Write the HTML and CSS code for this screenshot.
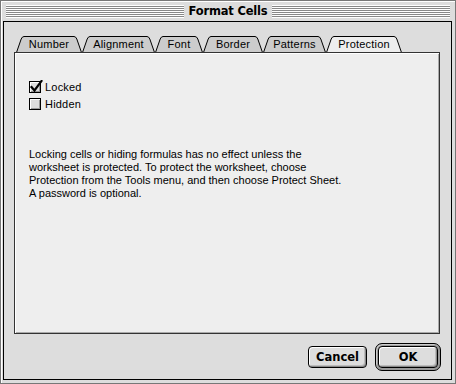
FILE: index.html
```html
<!DOCTYPE html>
<html>
<head>
<meta charset="utf-8">
<title>Format Cells</title>
<link rel="stylesheet" href="styles.css">
</head>
<body>
<div class="window">
  <div class="titlebar">
    <div class="stripes"></div>
    <div class="title">Format Cells</div>
    <div class="stripes"></div>
  </div>
  <div class="content">
    <div class="tabs">
      <div class="tab">
        <svg class="tab-edge" width="8" height="17" viewBox="0 0 8 17"><path class="tab-fill" d="M0 17 L5.2 3 Q6.2 0.5 8 0.5 L8 17 Z"/><path class="tab-line" d="M0.5 16.5 L5.2 3 Q6.2 0.5 8 0.5"/></svg>
        <span class="tab-label w-number">Number</span>
        <svg class="tab-edge" width="8" height="17" viewBox="0 0 8 17"><path class="tab-fill" d="M8 17 L2.8 3 Q1.8 0.5 0 0.5 L0 17 Z"/><path class="tab-line" d="M7.5 16.5 L2.8 3 Q1.8 0.5 0 0.5"/></svg>
      </div>
      <div class="tab">
        <svg class="tab-edge" width="8" height="17" viewBox="0 0 8 17"><path class="tab-fill" d="M0 17 L5.2 3 Q6.2 0.5 8 0.5 L8 17 Z"/><path class="tab-line" d="M0.5 16.5 L5.2 3 Q6.2 0.5 8 0.5"/></svg>
        <span class="tab-label w-alignment">Alignment</span>
        <svg class="tab-edge" width="8" height="17" viewBox="0 0 8 17"><path class="tab-fill" d="M8 17 L2.8 3 Q1.8 0.5 0 0.5 L0 17 Z"/><path class="tab-line" d="M7.5 16.5 L2.8 3 Q1.8 0.5 0 0.5"/></svg>
      </div>
      <div class="tab">
        <svg class="tab-edge" width="8" height="17" viewBox="0 0 8 17"><path class="tab-fill" d="M0 17 L5.2 3 Q6.2 0.5 8 0.5 L8 17 Z"/><path class="tab-line" d="M0.5 16.5 L5.2 3 Q6.2 0.5 8 0.5"/></svg>
        <span class="tab-label w-font">Font</span>
        <svg class="tab-edge" width="8" height="17" viewBox="0 0 8 17"><path class="tab-fill" d="M8 17 L2.8 3 Q1.8 0.5 0 0.5 L0 17 Z"/><path class="tab-line" d="M7.5 16.5 L2.8 3 Q1.8 0.5 0 0.5"/></svg>
      </div>
      <div class="tab">
        <svg class="tab-edge" width="8" height="17" viewBox="0 0 8 17"><path class="tab-fill" d="M0 17 L5.2 3 Q6.2 0.5 8 0.5 L8 17 Z"/><path class="tab-line" d="M0.5 16.5 L5.2 3 Q6.2 0.5 8 0.5"/></svg>
        <span class="tab-label w-border">Border</span>
        <svg class="tab-edge" width="8" height="17" viewBox="0 0 8 17"><path class="tab-fill" d="M8 17 L2.8 3 Q1.8 0.5 0 0.5 L0 17 Z"/><path class="tab-line" d="M7.5 16.5 L2.8 3 Q1.8 0.5 0 0.5"/></svg>
      </div>
      <div class="tab">
        <svg class="tab-edge" width="8" height="17" viewBox="0 0 8 17"><path class="tab-fill" d="M0 17 L5.2 3 Q6.2 0.5 8 0.5 L8 17 Z"/><path class="tab-line" d="M0.5 16.5 L5.2 3 Q6.2 0.5 8 0.5"/></svg>
        <span class="tab-label w-patterns">Patterns</span>
        <svg class="tab-edge" width="8" height="17" viewBox="0 0 8 17"><path class="tab-fill" d="M8 17 L2.8 3 Q1.8 0.5 0 0.5 L0 17 Z"/><path class="tab-line" d="M7.5 16.5 L2.8 3 Q1.8 0.5 0 0.5"/></svg>
      </div>
      <div class="tab tab-active">
        <svg class="tab-edge" width="8" height="17" viewBox="0 0 8 17"><path class="tab-fill" d="M0 17 L5.2 3 Q6.2 0.5 8 0.5 L8 17 Z"/><path class="tab-line" d="M0.5 16.5 L5.2 3 Q6.2 0.5 8 0.5"/></svg>
        <span class="tab-label w-protection">Protection</span>
        <svg class="tab-edge" width="8" height="17" viewBox="0 0 8 17"><path class="tab-fill" d="M8 17 L2.8 3 Q1.8 0.5 0 0.5 L0 17 Z"/><path class="tab-line" d="M7.5 16.5 L2.8 3 Q1.8 0.5 0 0.5"/></svg>
      </div>
    </div>
    <div class="panel">
      <div class="checks">
        <label class="check">
          <span class="box">
            <svg class="checkmark" width="14" height="14" viewBox="0 0 14 14"><path d="M2.5 7 L5.5 10.5 L12.5 1" fill="none" stroke="#000" stroke-width="2.2" stroke-linecap="square" stroke-linejoin="miter"/></svg>
          </span>
          <span class="check-text">Locked</span>
        </label>
        <label class="check">
          <span class="box"></span>
          <span class="check-text">Hidden</span>
        </label>
      </div>
      <p class="note">Locking cells or hiding formulas has no effect unless the<br>worksheet is protected. To protect the worksheet, choose<br>Protection from the Tools menu, and then choose Protect Sheet.<br>A password is optional.</p>
    </div>
    <div class="buttons">
      <button class="btn">Cancel</button>
      <div class="default-ring"><button class="btn btn-ok">OK</button></div>
    </div>
  </div>
</div>
</body>
</html>
```

FILE: styles.css
```css
html, body {
  margin: 0;
  padding: 0;
  background: #dddddd;
}

.window {
  width: 456px;
  height: 384px;
  box-sizing: border-box;
  border: 1px solid #777777;
  padding: 0 3px 3px 2px;
  background: #dddddd;
  box-shadow: inset 1px 1px 0 #ffffff;
  display: flex;
  flex-direction: column;
  font-family: "Liberation Sans", Arial, sans-serif;
  color: #000000;
}

.titlebar {
  height: 20px;
  display: flex;
  align-items: center;
  gap: 5px;
  padding: 0 2px 0 3px;
}

.stripes {
  flex: 1;
  height: 13px;
  background: repeating-linear-gradient(to bottom, #ffffff 0, #ffffff 1px, #888888 1px, #888888 2px);
  box-shadow: inset 0 -1px 0 #ffffff;
}

.title {
  font-family: "DejaVu Sans", sans-serif;
  font-weight: bold;
  font-size: 11.5px;
  letter-spacing: -0.2px;
  line-height: 20px;
}

.content {
  flex: 1;
  border: 1px solid #000000;
  background: #dddddd;
  padding: 14px 11px 0 10px;
  display: flex;
  flex-direction: column;
}

.tabs {
  display: flex;
  margin-left: 2px;
  height: 17px;
  position: relative;
  z-index: 1;
}

.tab {
  display: flex;
  height: 17px;
}

.tab-edge {
  display: block;
  flex: none;
}

.tab-fill {
  fill: #cccccc;
}

.tab-line {
  fill: none;
  stroke: #000000;
  stroke-width: 1;
}

.tab-label {
  box-sizing: border-box;
  height: 17px;
  border-top: 1px solid #000000;
  background: #cccccc;
  font-size: 11px;
  line-height: 15px;
  letter-spacing: 0.2px;
  text-align: center;
  white-space: nowrap;
}

.w-number { width: 50px; }
.w-alignment { width: 57px; }
.w-font { width: 32px; }
.w-border { width: 44px; }
.w-patterns { width: 47px; }
.w-protection { width: 60px; }

.tab-active {
  position: relative;
  z-index: 3;
}

.tab-active .tab-fill,
.tab-active .tab-label {
  fill: #eeeeee;
  background: #eeeeee;
}

.panel {
  position: relative;
  z-index: 2;
  margin-top: -1px;
  height: 282px;
  box-sizing: border-box;
  border: 1px solid #333333;
  background: #eeeeee;
  box-shadow: inset 1px 1px 0 #ffffff, inset -1px -1px 0 #aaaaaa;
  padding: 28px 14px 0 14px;
}

.tab-active ~ .panel {
  z-index: 0;
}

.checks {
  display: flex;
  flex-direction: column;
  gap: 5px;
}

.check {
  display: flex;
  align-items: center;
  gap: 4px;
  height: 12px;
  font-size: 11px;
  letter-spacing: 0.2px;
}

.box {
  position: relative;
  width: 12px;
  height: 12px;
  box-sizing: border-box;
  border: 1px solid #000000;
  background: #dddddd;
  box-shadow: inset 1px 1px 0 #ffffff, inset -1px -1px 0 #999999;
  flex: none;
}

.checkmark {
  position: absolute;
  left: -1px;
  top: -2px;
}

.note {
  margin: 38px 0 0 0;
  font-size: 11px;
  line-height: 13px;
  letter-spacing: 0;
}

.buttons {
  display: flex;
  justify-content: flex-end;
  align-items: center;
  gap: 8px;
  margin-top: 9px;
  margin-right: -1px;
}

.btn {
  width: 59px;
  height: 22px;
  box-sizing: border-box;
  border: 1px solid #000000;
  border-radius: 4px;
  background: #dddddd;
  box-shadow: inset 1px 1px 0 #ffffff, inset -1px -1px 0 #888888, inset -2px -2px 0 #bbbbbb;
  font-family: "DejaVu Sans", sans-serif;
  font-weight: bold;
  font-size: 11.5px;
  padding: 0;
  color: #000000;
}

.default-ring {
  border: 1px solid #000000;
  border-radius: 7px;
  padding: 2px;
  background: #999999;
  box-shadow: inset 1px 1px 0 #cccccc;
  display: flex;
}

.btn-ok {
  width: 60px;
}
```
